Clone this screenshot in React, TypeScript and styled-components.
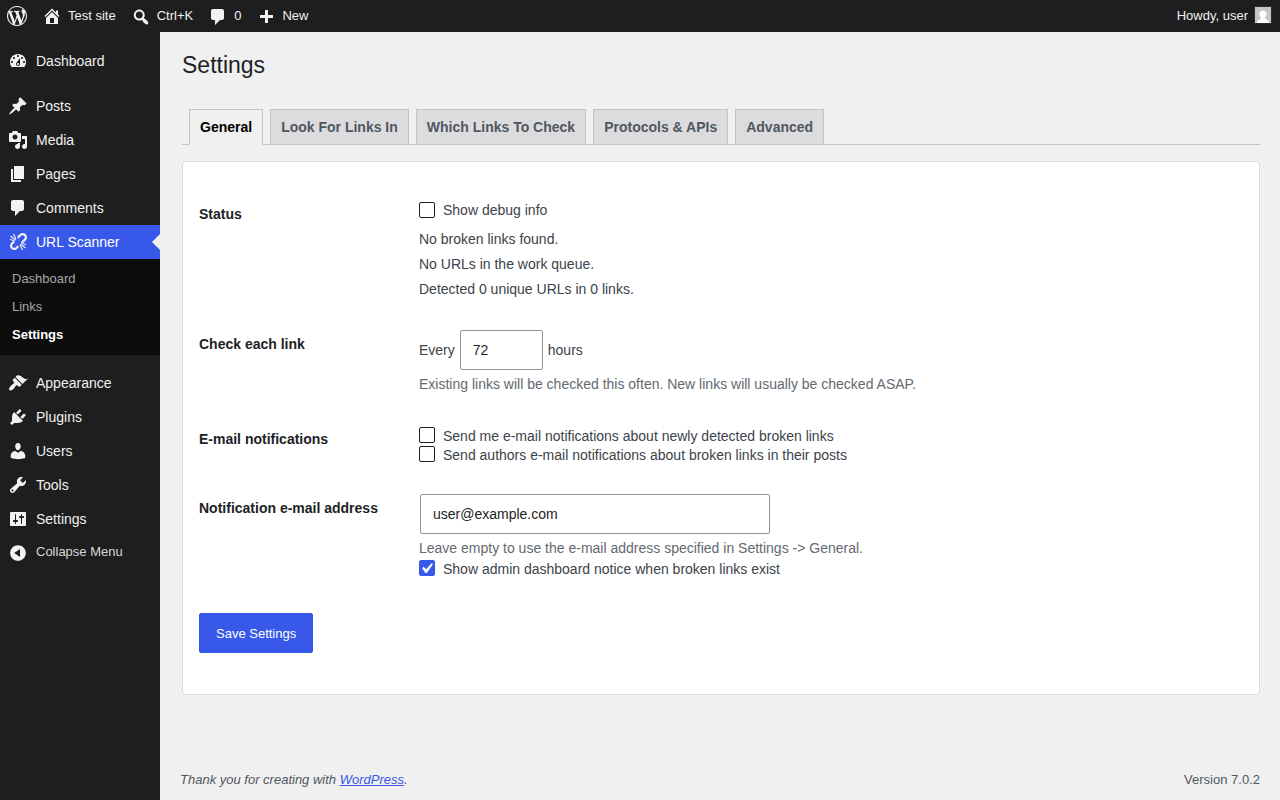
import React, { useState } from "react";
import styled, { createGlobalStyle, css } from "styled-components";

const colors = {
  base: "#1e1e1e",
  submenu: "#0c0c0c",
  accent: "#3858e9",
  page: "#f0f0f1",
  line: "#c3c4c7",
  heading: "#1d2327",
  text: "#3c434a",
  muted: "#646970",
  subtle: "#50575e",
  icon: "#f3f1f1",
};

const icons = {
  wordpress:
    "M20 10c0-5.51-4.49-10-10-10C4.48 0 0 4.49 0 10c0 5.52 4.48 10 10 10 5.51 0 10-4.48 10-10zM7.78 15.37L4.37 6.22c.55-.02 1.17-.08 1.17-.08.5-.06.44-1.13-.06-1.11 0 0-1.45.11-2.37.11-.18 0-.37 0-.58-.01C4.12 2.69 6.87 1.11 10 1.11c2.33 0 4.45.87 6.05 2.34-.68-.11-1.65.39-1.65 1.58 0 .74.45 1.36.9 2.1.35.61.55 1.36.55 2.46 0 1.49-1.4 5-1.4 5l-3.03-8.37c.54-.02.82-.17.82-.17.5-.05.44-1.25-.06-1.22 0 0-1.44.12-2.38.12-.87 0-2.33-.12-2.33-.12-.5-.03-.56 1.2-.06 1.22l.92.08 1.26 3.41zM17.41 10c.24-.64.74-1.87.43-4.25.7 1.29 1.05 2.71 1.05 4.25 0 3.29-1.73 6.24-4.4 7.78.97-2.59 1.94-5.2 2.92-7.78zM6.1 18.09C3.12 16.65 1.11 13.53 1.11 10c0-1.3.23-2.48.72-3.59C3.25 10.3 4.67 14.2 6.1 18.09zm4.03-6.63l2.58 6.98c-.86.29-1.76.45-2.71.45-.79 0-1.57-.11-2.29-.33.81-2.38 1.62-4.74 2.42-7.1z",
  home: "M16 8.5l1.53 1.53-1.06 1.06L10 4.6l-6.47 6.49-1.06-1.06L10 2.5l4 4v-2h2v4zm-6-2.46l6 5.99V18H4v-5.97zM12 17v-5H8v5h4z",
  search:
    "M12.14 4.18c1.87 1.87 2.11 4.75.72 6.89.12.1.22.21.36.31.2.16.47.36.81.59.34.24.56.39.66.47.42.31.73.57.94.78.32.32.6.65.84 1 .25.35.44.69.59 1.04.14.35.21.68.18 1-.02.32-.14.59-.36.81s-.49.34-.81.36c-.31.02-.65-.04-.99-.19-.35-.14-.7-.34-1.04-.59-.35-.24-.68-.52-1-.84-.21-.21-.47-.52-.77-.93-.1-.13-.25-.35-.47-.66-.22-.32-.4-.57-.56-.78-.16-.2-.29-.35-.44-.5-2.07 1.09-4.69.76-6.44-.98-2.14-2.15-2.14-5.64 0-7.78 2.15-2.15 5.63-2.15 7.78 0zm-1.41 6.36c1.36-1.37 1.36-3.58 0-4.95-1.37-1.37-3.59-1.37-4.95 0-1.37 1.37-1.37 3.58 0 4.95 1.36 1.37 3.58 1.37 4.95 0z",
  plus: "M17 8v3h-5v5H9v-5H4V8h5V3h3v5h5z",
  dashboard:
    "M3.76 16h12.48c1.1-1.37 1.76-3.11 1.76-5 0-4.42-3.58-8-8-8s-8 3.58-8 8c0 1.89.66 3.63 1.76 5zM10 4c.55 0 1 .45 1 1s-.45 1-1 1-1-.45-1-1 .45-1 1-1zM6 6c.55 0 1 .45 1 1s-.45 1-1 1-1-.45-1-1 .45-1 1-1zm8 0c.55 0 1 .45 1 1s-.45 1-1 1-1-.45-1-1 .45-1 1-1zm-5.37 5.55L12 7v6c0 1.1-.9 2-2 2s-2-.9-2-2c0-.57.24-1.08.63-1.45zM4 10c.55 0 1 .45 1 1s-.45 1-1 1-1-.45-1-1 .45-1 1-1zm12 0c.55 0 1 .45 1 1s-.45 1-1 1-1-.45-1-1 .45-1 1-1zm-5 3c0-.55-.45-1-1-1s-1 .45-1 1 .45 1 1 1 1-.45 1-1z",
  post: "M10.44 3.02l1.82-1.82 6.36 6.35-1.83 1.82c-1.05-.68-2.48-.57-3.41.36l-.75.75c-.92.93-1.04 2.35-.35 3.41l-1.83 1.82-2.41-2.41-2.8 2.79c-.42.42-3.38 2.71-3.8 2.29s1.86-3.39 2.28-3.81l2.79-2.79L4.1 9.36l1.83-1.82c1.05.69 2.48.57 3.4-.36l.75-.75c.93-.92 1.05-2.35.36-3.41z",
  media:
    "M13 11V4c0-.55-.45-1-1-1h-1.67L9 1H5L3.67 3H2c-.55 0-1 .45-1 1v7c0 .55.45 1 1 1h10c.55 0 1-.45 1-1zM7 4.5c1.38 0 2.5 1.12 2.5 2.5S8.38 9.5 7 9.5 4.5 8.38 4.5 7 5.62 4.5 7 4.5zM14 6h5v10.5c0 1.38-1.12 2.5-2.5 2.5S14 17.88 14 16.5s1.12-2.5 2.5-2.5c.17 0 .34.02.5.05V9h-3V6zm-4 8.05V13h2v3.5c0 1.38-1.12 2.5-2.5 2.5S7 17.88 7 16.5 8.12 14 9.5 14c.17 0 .34.02.5.05z",
  page: "M6 15V2h10v13H6zm-1 1h8v2H3V5h2v11z",
  comment:
    "M5 2h9c1.1 0 2 .9 2 2v7c0 1.1-.9 2-2 2h-2l-5 5v-5H5c-1.1 0-2-.9-2-2V4c0-1.1.9-2 2-2z",
  unlink:
    "M17.74 2.26c1.68 1.69 1.68 4.41 0 6.1l-1.53 1.52c-.32.33-.69.58-1.08.77L13 10l1.69-1.64.76-.77.76-.76c.84-.84.84-2.2 0-3.04-.84-.85-2.2-.85-3.04 0l-.77.76-.76.76L10 7l-.65-2.14c.19-.38.44-.75.77-1.07l1.52-1.53c1.69-1.68 4.42-1.68 6.1 0zM9.36 13.69L10 13l.74 2.35-1.38 1.39c-1.69 1.68-4.41 1.68-6.1 0-1.68-1.68-1.68-4.42 0-6.1l1.39-1.38L7 10l-.69.64-1.52 1.53c-.85.84-.85 2.2 0 3.04.84.85 2.2.85 3.04 0z",
  appearance:
    "M14.48 11.06L7.41 3.99l1.5-1.5c.5-.56 2.3-.47 3.51.32 1.21.8 1.43 1.28 2.91 2.1 1.18.64 2.45 1.26 4.45.85zm-.71.71L6.7 4.7 4.93 6.47c-.39.39-.39 1.02 0 1.41l1.06 1.06c.39.39.39 1.03 0 1.42-.6.6-1.43 1.11-2.21 1.69-.35.26-.7.53-1.01.84C1.43 14.23.4 16.08 1.4 17.07c.99 1 2.84-.03 4.18-1.36.31-.31.58-.66.85-1.02.57-.78 1.08-1.61 1.69-2.21.39-.39 1.02-.39 1.41 0l1.06 1.06c.39.39 1.02.39 1.41 0z",
  plugins:
    "M13.11 4.36L9.87 7.6 8 5.73l3.24-3.24c.35-.34 1.05-.2 1.56.32.52.51.66 1.21.31 1.55zm-8 1.77l.91-1.12 9.01 9.01-1.19.84c-.71.71-2.63 1.16-3.82 1.16H6.14L4.9 17.26c-.59.59-1.54.59-2.12 0-.59-.58-.59-1.53 0-2.12l1.24-1.24v-3.88c0-1.13.4-3.19 1.09-3.89zm7.26 3.97l3.24-3.24c.34-.35 1.04-.21 1.55.31.52.51.66 1.21.31 1.55l-3.24 3.25z",
  users:
    "M10 9.25c-2.27 0-2.73-3.44-2.73-3.44C7 4.02 7.82 2 9.97 2c2.16 0 2.98 2.02 2.71 3.81 0 0-.41 3.44-2.68 3.44zm0 2.57L12.72 10c2.39 0 4.52 2.33 4.52 4.53v2.49s-3.65 1.13-7.24 1.13c-3.65 0-7.24-1.13-7.24-1.13v-2.49c0-2.25 1.94-4.48 4.47-4.48z",
  tools:
    "M16.68 9.77c-1.34 1.34-3.3 1.67-4.95.99l-5.41 6.52c-.99.99-2.59.99-3.58 0s-.99-2.59 0-3.57l6.52-5.42c-.68-1.65-.35-3.61.99-4.95 1.28-1.28 3.12-1.62 4.72-1.06l-2.89 2.89 2.82 2.82 2.86-2.87c.53 1.58.18 3.39-1.08 4.65zM3.81 16.21c.4.39 1.04.39 1.43 0 .4-.4.4-1.04 0-1.43-.39-.4-1.03-.4-1.43 0-.39.39-.39 1.03 0 1.43z",
  settings:
    "M18 16V4c0-.55-.45-1-1-1H3c-.55 0-1 .45-1 1v12c0 .55.45 1 1 1h14c.55 0 1-.45 1-1zM8 11h1c.55 0 1 .45 1 1s-.45 1-1 1H8v1.5c0 .28-.22.5-.5.5s-.5-.22-.5-.5V13H6c-.55 0-1-.45-1-1s.45-1 1-1h1V5.5c0-.28.22-.5.5-.5s.5.22.5.5V11zm5-2h-1c-.55 0-1-.45-1-1s.45-1 1-1h1V5.5c0-.28.22-.5.5-.5s.5.22.5.5V7h1c.55 0 1 .45 1 1s-.45 1-1 1h-1v5.5c0 .28-.22.5-.5.5s-.5-.22-.5-.5V9z",
  collapse:
    "M10 2.16c4.33 0 7.84 3.51 7.84 7.84s-3.51 7.84-7.84 7.84S2.16 14.33 2.16 10 5.71 2.16 10 2.16zm2 11.72V6.12L6.18 9.97z",
};

type IconName = keyof typeof icons;

const GlobalStyle = createGlobalStyle`
  *, *::before, *::after { box-sizing: border-box; }
  body {
    margin: 0;
    background: ${colors.page};
    color: ${colors.text};
    font: 14px/20px "Liberation Sans", Arial, sans-serif;
  }
`;

const Glyph = styled.svg`
  flex: none;
  width: 20px;
  height: 20px;
  fill: ${colors.icon};
`;

function Icon({ name }: { name: IconName }) {
  return (
    <Glyph viewBox="0 0 20 20" aria-hidden="true">
      <path fillRule="evenodd" d={icons[name]} />
      {name === "unlink" && (
        <path
          d="M2.500 4l5 4M5.500 2l2.500 5M2 7.200l5 2M17.500 16l-5-4M14.500 18l-2.500-5M18 12.800l-5-2"
          fill="none"
          stroke={colors.icon}
          strokeWidth="1.1"
        />
      )}
    </Glyph>
  );
}

const Screen = styled.div`
  display: flex;
  flex-direction: column;
  min-height: 100vh;
`;

const AdminBar = styled.header`
  display: flex;
  justify-content: space-between;
  height: 32px;
  background: ${colors.base};
`;

const BarGroup = styled.nav`
  display: flex;
`;

const barPadding = {
  logo: "0 7px",
  item: "0 7px 0 8px",
  profile: "0 8px",
};

const BarLink = styled.a<{ $kind: keyof typeof barPadding; $low?: boolean }>`
  display: flex;
  align-items: center;
  gap: 6px;
  padding: ${(p) => barPadding[p.$kind]};
  color: #f0f0f1;
  font-size: 13px;
  line-height: 32px;
  text-decoration: none;

  ${Glyph} {
    margin-top: ${(p) => (p.$low ? "2px" : "0")};
  }
`;

const AvatarImage = styled.svg`
  width: 18px;
  height: 18px;
  margin-bottom: 2px;
  border: 1px solid #2c2c2c;
`;

const Body = styled.div`
  display: flex;
  flex: 1;
`;

const Sidebar = styled.nav`
  flex: none;
  width: 160px;
  padding-top: 12px;
  background: ${colors.base};
`;

const MenuList = styled.ul`
  margin: 0 0 11px;
  padding: 0;
  list-style: none;

  &:last-of-type {
    margin-bottom: 0;
  }
`;

const menuRow = css`
  display: flex;
  align-items: center;
  gap: 8px;
  width: 100%;
  height: 34px;
  padding: 0 8px;
`;

const MenuLink = styled.a<{ $current?: boolean }>`
  ${menuRow}
  position: relative;
  background: ${(p) => (p.$current ? colors.accent : "transparent")};
  color: ${(p) => (p.$current ? "#fff" : "#f0f0f1")};
  text-decoration: none;

  ${(p) =>
    p.$current &&
    css`
      &::after {
        content: "";
        position: absolute;
        top: 9px;
        right: 0;
        border: 8px solid transparent;
        border-left-width: 0;
        border-right-color: ${colors.page};
      }
    `}
`;

const SubMenu = styled.ul`
  margin: 0;
  padding: 6px 0;
  background: ${colors.submenu};
  list-style: none;
`;

const SubLink = styled.a<{ $current?: boolean }>`
  display: block;
  padding: 0 12px;
  color: ${(p) => (p.$current ? "#fff" : "#a7a7a7")};
  font-size: 13px;
  font-weight: ${(p) => (p.$current ? 700 : 400)};
  line-height: 28px;
  text-decoration: none;
`;

const CollapseButton = styled.button`
  ${menuRow}
  border: 0;
  background: none;
  color: #d8d8d8;
  font: 13px/32px "Liberation Sans", Arial, sans-serif;
  text-align: left;

  span {
    padding-bottom: 2px;
  }
`;

const Content = styled.div`
  display: flex;
  flex: 1;
  flex-direction: column;
  justify-content: space-between;
  min-width: 0;
  padding: 0 20px;
`;

const Main = styled.main`
  padding: 18px 0 0 2px;
`;

const PageTitle = styled.h1`
  margin: 0 0 29px;
  color: ${colors.heading};
  font-size: 23px;
  font-weight: 400;
  line-height: 30px;
`;

const Tabs = styled.nav`
  display: flex;
  gap: 7px;
  padding: 0 7px;
  border-bottom: 1px solid ${colors.line};
`;

const Tab = styled.a<{ $active?: boolean }>`
  margin-bottom: ${(p) => (p.$active ? "-1px" : "0")};
  padding: 5px 10px;
  border: 1px solid ${colors.line};
  border-bottom: ${(p) => (p.$active ? `1px solid ${colors.page}` : "0")};
  background: ${(p) => (p.$active ? colors.page : "#dcdcde")};
  color: ${(p) => (p.$active ? "#000" : colors.subtle)};
  font-weight: 700;
  line-height: 24px;
  text-decoration: none;
`;

const Card = styled.form`
  margin-top: 16px;
  padding: 23px 16px 41px;
  border: 1px solid #dcdcde;
  border-radius: 4px;
  background: #fff;
`;

const Row = styled.div`
  display: grid;
  grid-template-columns: 220px 1fr;
  padding: 15px 0 16px;
`;

const RowTitle = styled.div`
  padding-top: 5px;
  color: ${colors.heading};
  font-weight: 700;
  line-height: 18px;
`;

const CheckLabel = styled.label<{ $tall?: boolean }>`
  display: flex;
  align-items: center;
  gap: 8px;
  height: ${(p) => (p.$tall ? 20 : 19)}px;
`;

const CheckText = styled.span<{ $tall?: boolean }>`
  padding-top: ${(p) => (p.$tall ? 0 : 2)}px;
`;

const CheckBox = styled.span`
  position: relative;
  width: 16px;
  height: 16px;
`;

const CheckInput = styled.input`
  display: block;
  width: 16px;
  height: 16px;
  margin: 0;
  appearance: none;
  border: 1px solid ${colors.base};
  border-radius: 2px;
  background: #fff;

  &:checked {
    border-color: ${colors.accent};
    background: ${colors.accent};
  }
`;

const CheckMark = styled.svg`
  position: absolute;
  top: -2px;
  left: -3px;
  width: 21px;
  height: 21px;
  fill: #fff;
  pointer-events: none;
`;

const StatusLines = styled.div`
  display: grid;
  gap: 5px;
  padding-top: 9px;

  p {
    margin: 0;
  }
`;

const Inline = styled.div`
  display: flex;
  align-items: center;
  gap: 4px;
`;

const TextInput = styled.input<{ $size: "small" | "regular" }>`
  width: ${(p) => (p.$size === "small" ? "83px" : "350px")};
  max-width: 100%;
  height: 40px;
  margin: 0 1px;
  padding: 0 12px;
  border: 1px solid #949494;
  border-radius: 2px;
  background: #fff;
  color: ${colors.base};
  font: 14px/20px "Liberation Sans", Arial, sans-serif;
`;

const Field = styled.div`
  display: flex;
  flex-direction: column;
  align-items: flex-start;
`;

const Description = styled.p`
  margin: 4px 0 0;
  color: ${colors.muted};
`;

const SaveButton = styled.button`
  height: 40px;
  margin-top: 20px;
  padding: 2px 16px 0;
  border: 1px solid ${colors.accent};
  border-radius: 2px;
  background: ${colors.accent};
  color: #fff;
  font: 13px/20px "Liberation Sans", Arial, sans-serif;
`;

const Footer = styled.footer`
  display: flex;
  justify-content: space-between;
  padding: 10px 0;
  color: ${colors.subtle};
  font-size: 13px;

  a {
    color: ${colors.accent};
  }
`;

function Check({ label, initial = false, tall }: { label: string; initial?: boolean; tall?: boolean }) {
  const [on, setOn] = useState(initial);
  return (
    <CheckLabel $tall={tall}>
      <CheckBox>
        <CheckInput type="checkbox" checked={on} onChange={(e) => setOn(e.target.checked)} />
        {on && (
          <CheckMark viewBox="0 0 20 20" aria-hidden="true">
            <path d="M14.83 4.89l1.34.94-5.81 8.38H9.02L5.78 9.67l1.34-1.25 2.57 2.4z" />
          </CheckMark>
        )}
      </CheckBox>
      <CheckText $tall={tall}>{label}</CheckText>
    </CheckLabel>
  );
}

type Item = { icon: IconName; label: string; current?: boolean; children?: string[] };

const menu: Item[][] = [
  [{ icon: "dashboard", label: "Dashboard" }],
  [
    { icon: "post", label: "Posts" },
    { icon: "media", label: "Media" },
    { icon: "page", label: "Pages" },
    { icon: "comment", label: "Comments" },
    { icon: "unlink", label: "URL Scanner", current: true, children: ["Dashboard", "Links", "Settings"] },
  ],
  [
    { icon: "appearance", label: "Appearance" },
    { icon: "plugins", label: "Plugins" },
    { icon: "users", label: "Users" },
    { icon: "tools", label: "Tools" },
    { icon: "settings", label: "Settings" },
  ],
];

const barItems: { icon: IconName; label: string; low?: boolean }[] = [
  { icon: "home", label: "Test site" },
  { icon: "search", label: "Ctrl+K", low: true },
  { icon: "comment", label: "0", low: true },
  { icon: "plus", label: "New", low: true },
];

const tabs = ["General", "Look For Links In", "Which Links To Check", "Protocols & APIs", "Advanced"];

export default function App() {
  return (
    <Screen>
      <GlobalStyle />
      <AdminBar>
        <BarGroup aria-label="Toolbar">
          <BarLink href="#about" $kind="logo" aria-label="About WordPress">
            <Icon name="wordpress" />
          </BarLink>
          {barItems.map((item) => (
            <BarLink key={item.label} href="#bar" $kind="item" $low={item.low}>
              <Icon name={item.icon} />
              {item.label}
            </BarLink>
          ))}
        </BarGroup>
        <BarLink href="#profile" $kind="profile">
          Howdy, user
          <AvatarImage viewBox="0 0 16 16" aria-hidden="true">
            <rect width="16" height="16" fill="#c5c5c5" />
            <path
              fill="#fff"
              d="M8 3.500c2.200 0 3.600 1.600 3.600 3.800 0 1.500-.7 2.800-1.600 3.500v1c1.900.5 3.700 1.600 4.200 4.200H1.800c.5-2.600 2.300-3.700 4.200-4.200v-1c-.9-.7-1.600-2-1.600-3.500C4.400 5.100 5.800 3.500 8 3.500z"
            />
          </AvatarImage>
        </BarLink>
      </AdminBar>

      <Body>
        <Sidebar aria-label="Main menu">
          {menu.map((group, index) => (
            <MenuList key={index}>
              {group.map((item) => (
                <li key={item.label}>
                  <MenuLink href="#menu" $current={item.current}>
                    <Icon name={item.icon} />
                    {item.label}
                  </MenuLink>
                  {item.children && (
                    <SubMenu>
                      {item.children.map((child) => (
                        <li key={child}>
                          <SubLink href="#submenu" $current={child === "Settings"}>
                            {child}
                          </SubLink>
                        </li>
                      ))}
                    </SubMenu>
                  )}
                </li>
              ))}
            </MenuList>
          ))}
          <CollapseButton type="button">
            <Icon name="collapse" />
            <span>Collapse Menu</span>
          </CollapseButton>
        </Sidebar>

        <Content>
          <Main>
            <PageTitle>Settings</PageTitle>
            <Tabs aria-label="Settings sections">
              {tabs.map((tab, index) => (
                <Tab key={tab} href="#tab" $active={index === 0}>
                  {tab}
                </Tab>
              ))}
            </Tabs>

            <Card onSubmit={(e) => e.preventDefault()}>
              <Row>
                <RowTitle>Status</RowTitle>
                <div>
                  <Check label="Show debug info" tall />
                  <StatusLines>
                    <p>No broken links found.</p>
                    <p>No URLs in the work queue.</p>
                    <p>Detected 0 unique URLs in 0 links.</p>
                  </StatusLines>
                </div>
              </Row>
              <Row>
                <RowTitle as="label" htmlFor="interval">
                  Check each link
                </RowTitle>
                <Field>
                  <Inline>
                    Every
                    <TextInput id="interval" type="text" inputMode="numeric" $size="small" defaultValue="72" />
                    hours
                  </Inline>
                  <Description>
                    Existing links will be checked this often. New links will usually be checked ASAP.
                  </Description>
                </Field>
              </Row>
              <Row>
                <RowTitle>E-mail notifications</RowTitle>
                <div>
                  <Check label="Send me e-mail notifications about newly detected broken links" />
                  <Check label="Send authors e-mail notifications about broken links in their posts" />
                </div>
              </Row>
              <Row>
                <RowTitle as="label" htmlFor="email">
                  Notification e-mail address
                </RowTitle>
                <Field>
                  <TextInput id="email" type="text" $size="regular" defaultValue="user@example.com" />
                  <Description>
                    Leave empty to use the e-mail address specified in Settings -&gt; General.
                  </Description>
                  <Check label="Show admin dashboard notice when broken links exist" initial />
                </Field>
              </Row>
              <SaveButton type="submit">Save Settings</SaveButton>
            </Card>
          </Main>

          <Footer>
            <em>
              Thank you for creating with <a href="#wordpress">WordPress</a>.
            </em>
            <span>Version 7.0.2</span>
          </Footer>
        </Content>
      </Body>
    </Screen>
  );
}
